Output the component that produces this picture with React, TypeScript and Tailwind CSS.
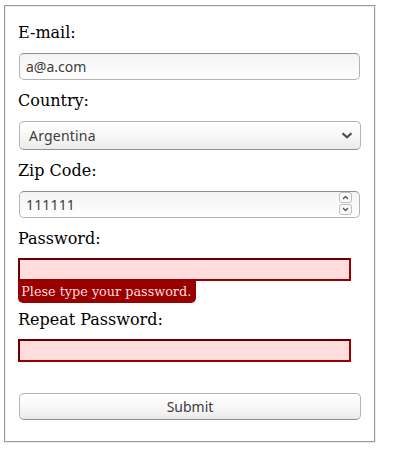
import type { ReactNode } from "react";

const control =
  "block h-[27px] w-[341px] rounded-[5px] border border-[#b3b3b3] border-t-[#8e8e8e] bg-linear-to-b from-[#f3f3f3] to-white text-[#3c3c3c] outline-none font-['Noto_Sans','Open_Sans',sans-serif] text-[14px]";
const invalid =
  "block h-[23px] w-[333px] border-2 border-t-[#660000] border-l-[#660000] border-r-[#990000] border-b-[#990000] bg-[#ffdddd] px-1 outline-none";
const button =
  "rounded-[5px] border border-[#b4b4b4] border-b-[#8f8f8f] bg-linear-to-b from-white via-[#f8f8f8] to-[#ebeae9] text-[#3c3c3c] font-['Noto_Sans','Open_Sans',sans-serif] text-[14px]";

function Label({ children, htmlFor }: { children: ReactNode; htmlFor: string }) {
  return (
    <label htmlFor={htmlFor} className="block h-[19px] text-[16px] leading-[19px] whitespace-nowrap">
      {children}
    </label>
  );
}

function Stepper({ up }: { up?: boolean }) {
  return (
    <span className="flex h-[11px] w-[13px] items-center justify-center rounded-[3px] border border-[#bdbdbd] bg-[#fafafa]">
      <svg width="7" height="5" viewBox="0 0 7 5" fill="none" stroke="#555" strokeWidth="1.4">
        <path d={up ? "M1 4 3.5 1.5 6 4" : "M1 1 3.5 3.5 6 1"} />
      </svg>
    </span>
  );
}

export default function App() {
  return (
    <div className="h-[472px] w-[410px] bg-white pt-[5px] pl-[4px] font-['DejaVu_Serif',serif] text-black">
      <div className="h-[438px] w-[372px] border border-t-[#999] border-r-[#ededed] border-b-[#ededed] border-l-[#999]">
        <form className="h-full border border-t-[#ededed] border-r-[#999] border-b-[#999] border-l-[#ededed] pt-4 pl-3">
          <div className="h-[68px]">
            <Label htmlFor="email">E-mail:</Label>
            <input id="email" defaultValue="a@a.com" className={`${control} mt-[11px] ml-px px-[6px]`} />
          </div>
          <div className="h-[70px]">
            <Label htmlFor="country">Country:</Label>
            <button id="country" type="button" className={`${button} mt-[11px] ml-px flex h-[29px] w-[342px] items-center justify-between pr-[7px] pl-[9px]`}>
              <span className="tracking-[0.2px]">Argentina</span>
              <svg width="12" height="8" viewBox="0 0 12 8" fill="none" stroke="#4a4a4a" strokeWidth="2.2">
                <path d="M1.5 1.2 6 5.2 10.5 1.2" />
              </svg>
            </button>
          </div>
          <div className="h-[68px]">
            <Label htmlFor="zip">Zip Code:</Label>
            <div className={`${control} mt-[11px] ml-px`}>
              <div className="flex h-full justify-between pr-[7px] pl-[6px]">
                <input id="zip" defaultValue="111111" className="w-[200px] bg-transparent tracking-[0.15px] outline-none" />
                <div className="flex flex-col gap-px">
                  <Stepper up />
                  <Stepper />
                </div>
              </div>
            </div>
          </div>
          <div className="h-[81px]">
            <Label htmlFor="password">Password:</Label>
            <input id="password" type="password" className={`${invalid} mt-[10px]`} />
            <p className="h-[22px] w-[178px] rounded-b-[5px] bg-[#990000] pl-[3.2px] text-[12.8px] leading-[21px] whitespace-nowrap text-[#ffdddd]">
              Plese type your password.
            </p>
          </div>
          <div className="h-[83px]">
            <Label htmlFor="repeat">Repeat Password:</Label>
            <input id="repeat" type="password" className={`${invalid} mt-[10px]`} />
          </div>
          <button type="button" className={`${button} ml-px flex h-[27px] w-[342px] items-center justify-center`}>
            Submit
          </button>
        </form>
      </div>
    </div>
  );
}
